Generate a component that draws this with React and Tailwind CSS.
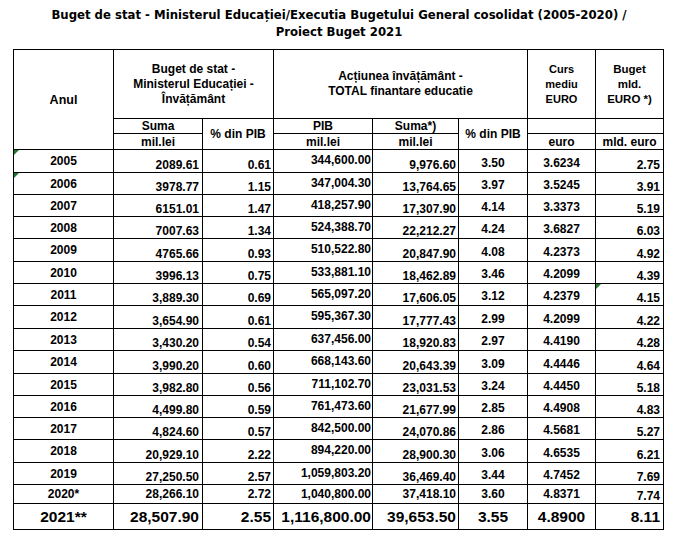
import React from 'react'

const rows = [
  ['2005', '2089.61', '0.61', '344,600.00', '9,976.60', '3.50', '3.6234', '2.75', 'h-[23px]'],
  ['2006', '3978.77', '1.15', '347,004.30', '13,764.65', '3.97', '3.5245', '3.91', 'h-[22px]'],
  ['2007', '6151.01', '1.47', '418,257.90', '17,307.90', '4.14', '3.3373', '5.19', 'h-[22px]'],
  ['2008', '7007.63', '1.34', '524,388.70', '22,212.27', '4.24', '3.6827', '6.03', 'h-[22px]'],
  ['2009', '4765.66', '0.93', '510,522.80', '20,847.90', '4.08', '4.2373', '4.92', 'h-[23px]'],
  ['2010', '3996.13', '0.75', '533,881.10', '18,462.89', '3.46', '4.2099', '4.39', 'h-[22px]'],
  ['2011', '3,889.30', '0.69', '565,097.20', '17,606.05', '3.12', '4.2379', '4.15', 'h-[22px]'],
  ['2012', '3,654.90', '0.61', '595,367.30', '17,777.43', '2.99', '4.2099', '4.22', 'h-[23px]'],
  ['2013', '3,430.20', '0.54', '637,456.00', '18,920.83', '2.97', '4.4190', '4.28', 'h-[22px]'],
  ['2014', '3,990.20', '0.60', '668,143.60', '20,643.39', '3.09', '4.4446', '4.64', 'h-[23px]'],
  ['2015', '3,982.80', '0.56', '711,102.70', '23,031.53', '3.24', '4.4450', '5.18', 'h-[22px]'],
  ['2016', '4,499.80', '0.59', '761,473.60', '21,677.99', '2.85', '4.4908', '4.83', 'h-[22px]'],
  ['2017', '4,824.60', '0.57', '842,500.00', '24,070.86', '2.86', '4.5681', '5.27', 'h-[22px]'],
  ['2018', '20,929.10', '2.22', '894,220.00', '28,900.30', '3.06', '4.6535', '6.21', 'h-[23px]'],
  ['2019', '27,250.50', '2.57', '1,059,803.20', '36,469.40', '3.44', '4.7452', '7.69', 'h-[22px]'],
]

// excel "error" marker in the corner of a few cells
const Flag = () => (
  <span className="absolute left-0 top-0 w-0 h-0 border-t-[5px] border-r-[5px] border-t-[#1f7a2e] border-r-transparent" />
)

const cell = 'border-r border-b border-black flex'

const App = () => {
  return (
    <div className="w-[678px] h-[541px] bg-white text-black overflow-hidden">
      <div className="h-[49px] pt-[6px] text-center font-['DejaVu_Sans_Condensed','DejaVu_Sans',sans-serif] font-bold text-[13px] leading-[17px]">
        <p>Buget de stat - Ministerul Educației/Executia Bugetului General cosolidat (2005-2020) /</p>
        <p>Proiect Buget 2021</p>
      </div>

      <div className="ml-[13px] w-[651px] grid grid-cols-[100px_89px_71px_99px_86px_69px_68px_68px] grid-rows-[69px_15px_16px] border-l border-t border-black font-['Liberation_Sans',Arial,sans-serif] font-bold text-[12px] leading-[14px]">
        {/* header */}
        <div className={`${cell} row-span-3 items-center justify-center text-[12.5px]`}>Anul</div>
        <div className={`${cell} col-span-2 items-center justify-center text-center leading-[15px]`}>
          Buget de stat -<br />Ministerul Educației -<br />Învățământ
        </div>
        <div className={`${cell} col-span-3 items-center justify-center text-center leading-[15px]`}>
          Acțiunea învățământ -<br />TOTAL finantare educatie
        </div>
        <div className={`${cell} items-center justify-center text-center leading-[15px] text-[11px]`}>
          Curs<br />mediu<br />EURO
        </div>
        <div className={`${cell} items-center justify-center text-center leading-[15px] text-[11.5px]`}>
          Buget<br />mld.<br />EURO *)
        </div>

        <div className={`${cell} items-end justify-center`}>Suma</div>
        <div className={`${cell} row-span-2 items-center justify-center`}>% din PIB</div>
        <div className={`${cell} items-end justify-center`}>PIB</div>
        <div className={`${cell} items-end justify-center`}>Suma*)</div>
        <div className={`${cell} row-span-2 items-center justify-center`}>% din PIB</div>
        <div className={cell}></div>
        <div className={cell}></div>

        <div className={`${cell} items-center justify-center`}>mil.lei</div>
        <div className={`${cell} items-center justify-center`}>mil.lei</div>
        <div className={`${cell} items-center justify-center`}>mil.lei</div>
        <div className={`${cell} items-end justify-center`}>euro</div>
        <div className={`${cell} items-end justify-center`}>mld. euro</div>

        {/* data */}
        {rows.map((r, i) => (
          <React.Fragment key={r[0]}>
            <div className={`${cell} ${r[8]} relative items-center justify-center`}>
              {i < 2 && <Flag />}
              {r[0]}
            </div>
            <div className={`${cell} items-end justify-end pr-[3px]`}>{r[1]}</div>
            <div className={`${cell} items-end justify-end pr-[2px]`}>{r[2]}</div>
            <div className={`${cell} items-center justify-end pr-[1px] pb-[2px]`}>{r[3]}</div>
            <div className={`${cell} items-end justify-end pr-[2px]`}>{r[4]}</div>
            <div className={`${cell} items-end justify-center pb-[2px]`}>{r[5]}</div>
            <div className={`${cell} items-end justify-center pb-[2px]`}>{r[6]}</div>
            <div className={`${cell} relative items-end justify-end pr-[3px]`}>
              {r[0] === '2011' && <Flag />}
              {r[7]}
            </div>
          </React.Fragment>
        ))}

        <div className={`${cell} h-[19px] items-center justify-center`}>2020*</div>
        <div className={`${cell} items-center justify-end pr-[3px]`}>28,266.10</div>
        <div className={`${cell} items-center justify-end pr-[2px]`}>2.72</div>
        <div className={`${cell} items-center justify-end pr-[1px]`}>1,040,800.00</div>
        <div className={`${cell} items-center justify-end pr-[2px]`}>37,418.10</div>
        <div className={`${cell} items-center justify-center`}>3.60</div>
        <div className={`${cell} items-center justify-center`}>4.8371</div>
        <div className={`${cell} items-end justify-end pr-[3px]`}>7.74</div>

        <div className={`${cell} h-[26px] items-center justify-center text-[15.5px] leading-[18px]`}>2021**</div>
        <div className={`${cell} items-center justify-end pr-[3px] text-[15.5px] leading-[18px]`}>28,507.90</div>
        <div className={`${cell} items-center justify-end pr-[2px] text-[15.5px] leading-[18px]`}>2.55</div>
        <div className={`${cell} items-center justify-end pr-[1px] text-[15.5px] leading-[18px]`}>1,116,800.00</div>
        <div className={`${cell} items-center justify-end pr-[2px] text-[15.5px] leading-[18px]`}>39,653.50</div>
        <div className={`${cell} items-center justify-center text-[15.5px] leading-[18px]`}>3.55</div>
        <div className={`${cell} items-center justify-center text-[15.5px] leading-[18px]`}>4.8900</div>
        <div className={`${cell} items-center justify-end pr-[3px] text-[15.5px] leading-[18px]`}>8.11</div>
      </div>
    </div>
  )
}

export default App
